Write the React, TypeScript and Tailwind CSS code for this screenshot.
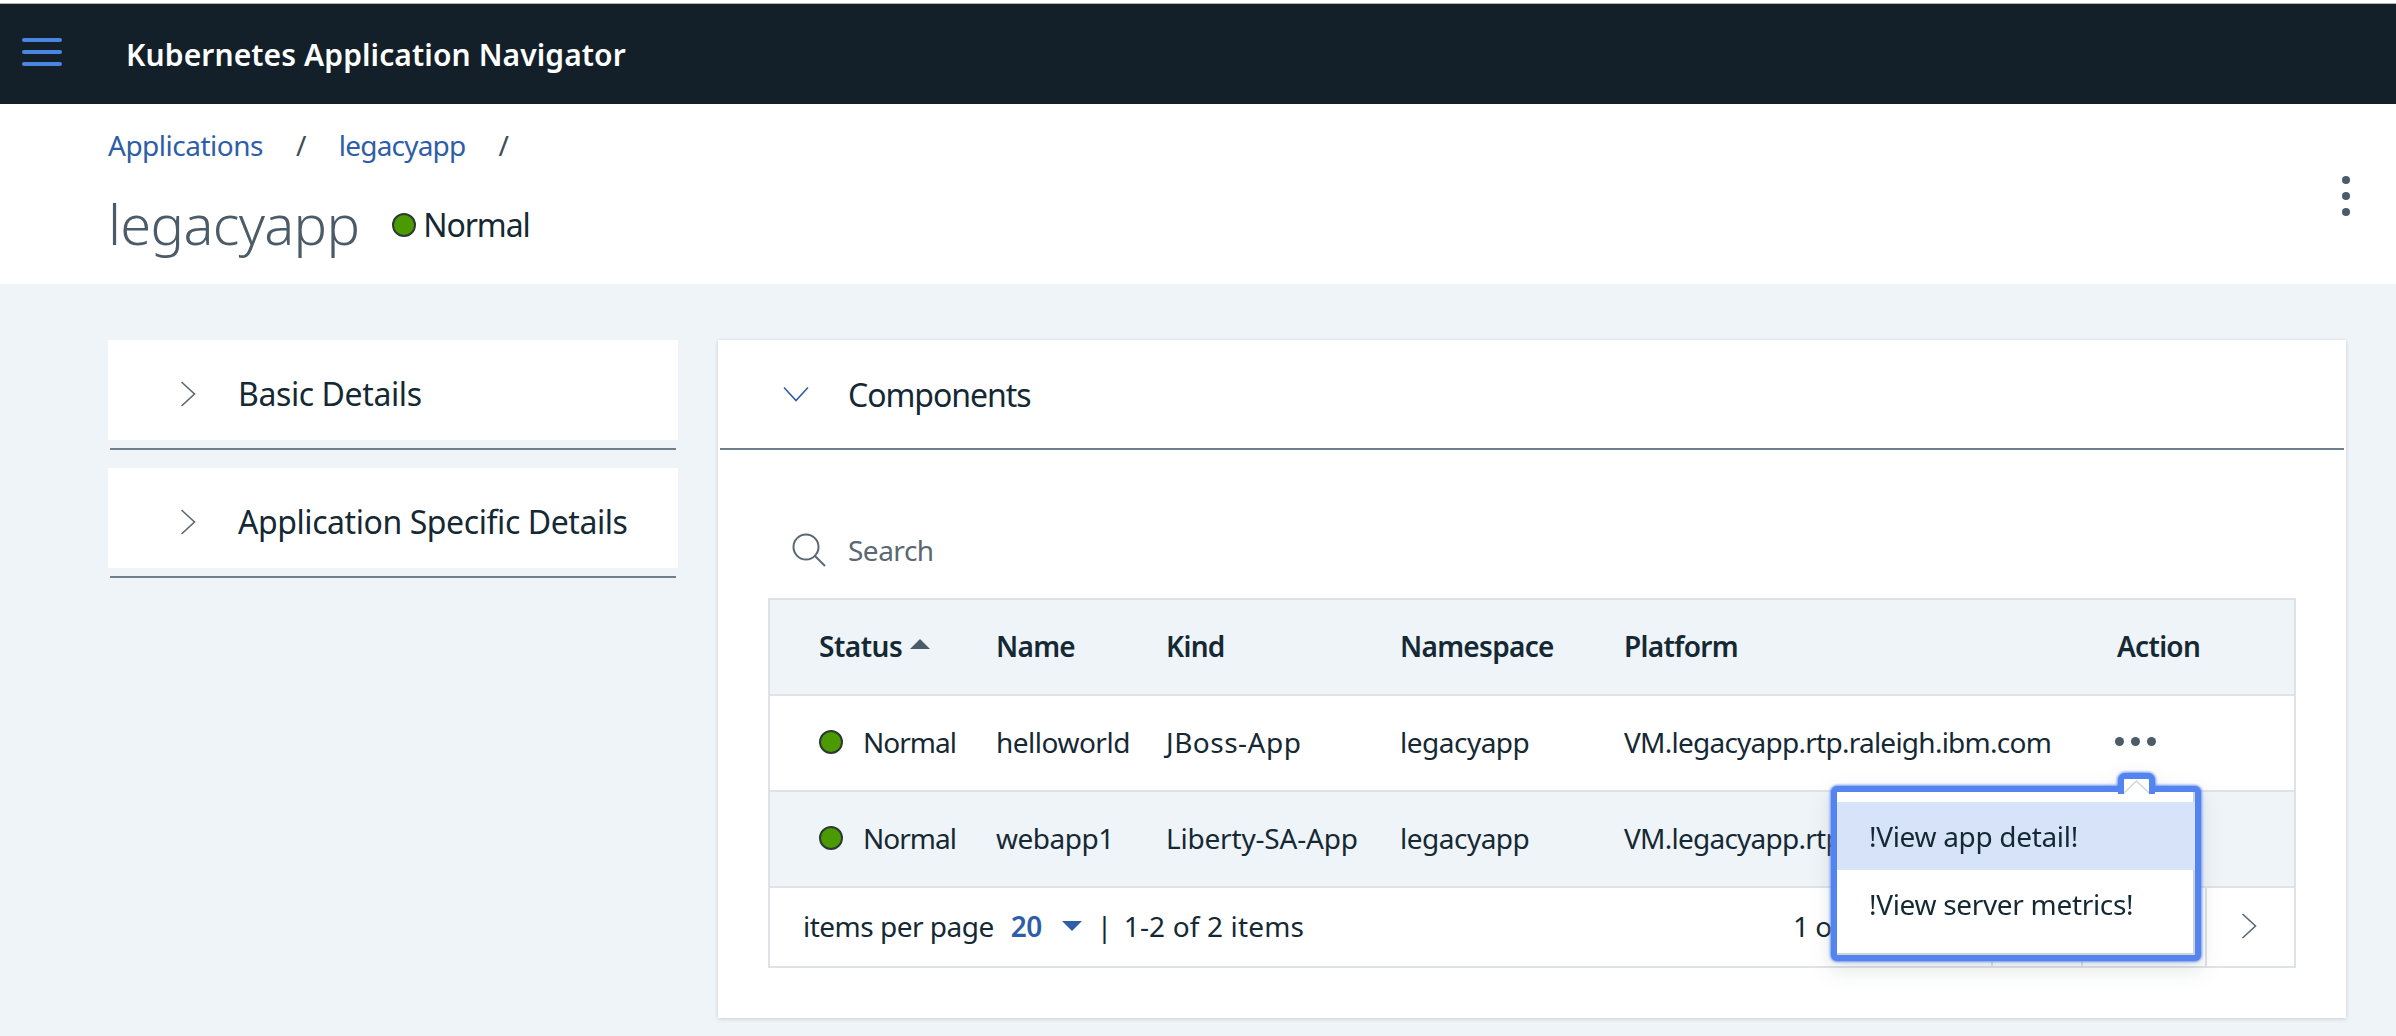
const F = "font-['Noto_Sans','Roboto',sans-serif]";

function Chevron({ className }: { className?: string }) {
  return (
    <svg className={className} width="16" height="26" viewBox="0 0 16 26" fill="none" stroke="currentColor" strokeWidth="1.6">
      <path d="M1.5 1 L14.5 13 L1.5 25" />
    </svg>
  );
}

function Dot({ className }: { className?: string }) {
  return <span className={`block w-6 h-6 rounded-full bg-[#4b9b00] border-2 border-[#2b3a35] shrink-0 ${className ?? ""}`} />;
}

function SideItem({ title, track }: { title: string; track: string }) {
  return (
    <div className="flex flex-col">
      <div className="h-[100px] bg-white flex items-center pl-[72px] pt-2">
        <Chevron className="text-[#5a6872] w-4 mr-[42px]" />
        <span className={`text-[32px] text-[#152934] ${track}`}>{title}</span>
      </div>
      <div className="h-[2px] mt-2 mx-[2px] bg-[#6f7f8c]" />
    </div>
  );
}

const COLS = "grid grid-cols-[177px_170px_234px_224px_493px_1fr] items-center";

function Row({ name, kind, kindTrack, alt }: { name: string; kind: string; kindTrack: string; alt?: boolean }) {
  return (
    <div className={`h-[94px] border-b-2 border-[#dfe3e6] box-content ${alt ? "bg-[#eff4f8]" : "bg-white"} ${COLS} pl-[49px] text-[28px] text-[#152934] tracking-[-0.5px]`}>
      <div className="flex items-center gap-[20px] -mt-[3px]">
        <Dot />
        <span className="tracking-[-1px]">Normal</span>
      </div>
      <span className="-mt-[3px]">{name}</span>
      <span className={`-mt-[3px] ${kindTrack}`}>{kind}</span>
      <span className="-mt-[3px]">legacyapp</span>
      <span className="-mt-[3px] whitespace-nowrap tracking-[-0.75px]">VM.legacyapp.rtp.raleigh.ibm.com</span>
      {!alt && (
        <span className="flex gap-[7px] -mt-[3px] ml-[-2px]">
          <i className="block w-[9px] h-[9px] rounded-full bg-[#4b5b68]" />
          <i className="block w-[9px] h-[9px] rounded-full bg-[#4b5b68]" />
          <i className="block w-[9px] h-[9px] rounded-full bg-[#4b5b68]" />
        </span>
      )}
    </div>
  );
}

export default function App() {
  return (
    <div className={`w-[2396px] h-[1036px] overflow-hidden bg-[#eff4f8] ${F} flex flex-col`}>
      <div className="h-[3px] bg-white shrink-0" />
      <div className="h-[1px] bg-[#b0b4b6] shrink-0" />
      <header className="h-[100px] bg-[#13202a] flex items-center shrink-0">
        <div className="ml-[22px] w-10 flex flex-col gap-2 -mt-[4px]">
          <i className="block h-1 rounded-sm bg-[#4a86e0]" />
          <i className="block h-1 rounded-sm bg-[#4a86e0]" />
          <i className="block h-1 rounded-sm bg-[#4a86e0]" />
        </div>
        <span className="ml-[64px] text-[30px] font-semibold text-white tracking-[0.1px]">Kubernetes Application Navigator</span>
      </header>

      <section className="h-[180px] bg-white flex justify-between shrink-0">
        <div className="pl-[108px] pt-[23px]">
          <nav className="flex items-center text-[28px] text-[#2f5ea8] h-9 tracking-[-0.5px]">
            <span>Applications</span>
            <span className="ml-[33px] text-[#3f4c55]">/</span>
            <span className="ml-[33px] tracking-[-0.8px]">legacyapp</span>
            <span className="ml-[33px] text-[#3f4c55]">/</span>
          </nav>
          <div className="flex items-center mt-[22px]">
            <h1 className="text-[56px] font-light text-[#4b5b68] leading-[76px] tracking-[-0.7px]">legacyapp</h1>
            <Dot className="ml-[33px] mt-[3px]" />
            <span className="ml-[7px] mt-[3px] text-[32px] text-[#152934] tracking-[-1.1px]">Normal</span>
          </div>
        </div>
        <div className="mr-[46px] mt-[72px] flex flex-col gap-2">
          <i className="block w-2 h-2 rounded-full bg-[#4b5b68]" />
          <i className="block w-2 h-2 rounded-full bg-[#4b5b68]" />
          <i className="block w-2 h-2 rounded-full bg-[#4b5b68]" />
        </div>
      </section>

      <main className="flex items-start gap-10 pl-[108px] pr-[50px] pt-14">
        <aside className="w-[570px] shrink-0 flex flex-col gap-[18px]">
          <SideItem title="Basic Details" track="tracking-[-0.4px]" />
          <SideItem title="Application Specific Details" track="tracking-[-0.43px]" />
        </aside>

        <div className="relative w-[1628px] h-[678px] bg-white shadow-[0_1px_4px_rgba(21,41,52,0.18)]">
          <div className="h-[110px] border-b-2 border-[#6f7f8c] box-border mx-[2px] flex items-center pl-[64px]">
            <Chevron className="text-[#2f5ea8] rotate-90 mr-[44px] ml-1 w-4" />
            <span className="mt-[2px] text-[32px] text-[#152934] tracking-[-1.05px]">Components</span>
          </div>
          <div className="h-[148px] flex items-center pl-[74px] pt-[52px] text-[28px] text-[#5a6872] tracking-[-0.5px]">
            <svg width="34" height="34" viewBox="0 0 34 34" fill="none" stroke="#5a6872" strokeWidth="2" className="mr-[22px]">
              <circle cx="14" cy="14" r="12.5" />
              <path d="M23 23 L33 33" />
            </svg>
            <span>Search</span>
          </div>

          <div className="mx-[50px] w-[1528px] border-2 border-[#dfe3e6] relative">
            <div className={`h-[96px] border-b-2 border-[#dfe3e6] bg-[#eff4f8] ${COLS} pl-[49px] pb-[3px] text-[28px] font-semibold text-[#152934] tracking-[-0.7px]`}>
              <span className="flex items-center gap-2 tracking-[-0.5px]">
                Status
                <svg width="20" height="10" viewBox="0 0 20 10" className="-mt-1"><path d="M10 0 L20 10 L0 10 Z" fill="#4b5b68" /></svg>
              </span>
              <span>Name</span>
              <span>Kind</span>
              <span>Namespace</span>
              <span>Platform</span>
              <span>Action</span>
            </div>
            <Row name="helloworld" kind="JBoss-App" kindTrack="tracking-[0.5px]" />
            <Row name="webapp1" kind="Liberty-SA-App" kindTrack="tracking-[-0.2px]" alt />
            <div className="h-[78px] flex items-center pl-[33px] pb-[3px] text-[28px] text-[#152934] tracking-[-0.5px]">
              <span>items per page</span>
              <span className="ml-[17px] font-semibold text-[#2f5ea8]">20</span>
              <svg width="20" height="10" viewBox="0 0 20 10" className="ml-5"><path d="M0 0 L20 0 L10 10 Z" fill="#2f5ea8" /></svg>
              <span className="ml-[15px]">|</span>
              <span className="ml-[12px] tracking-[0.15px]">1-2 of 2 items</span>
              <span className="ml-[489px]">1 of 1 pages</span>
              <span className="absolute right-[301px] bottom-0 h-[78px] w-[2px] bg-[#dfe3e6]" />
              <span className="absolute right-[211px] bottom-0 h-[78px] w-[2px] bg-[#dfe3e6]" />
              <span className="absolute right-[87px] bottom-0 h-[78px] w-[2px] bg-[#dfe3e6]" />
              <Chevron className="absolute right-[37px] bottom-[27px] text-[#5a6872] w-4" />
            </div>
          </div>

          <div className="absolute left-[1113px] top-[446px] w-[370px] h-[175px] [filter:drop-shadow(0_0_1.5px_rgba(90,139,240,1))_drop-shadow(0_0_1px_rgba(90,139,240,0.8))_drop-shadow(0_8px_10px_rgba(21,41,52,0.12))]">
            <div className="w-full h-full rounded-[6px] border-[6px] border-[#5484f0]/95 bg-white bg-clip-padding relative">
              <div className="w-full h-full border-b-2 border-r-2 border-[#cfd3d6] pt-[10px] text-[28px] text-[#152934] tracking-[-0.32px]">
                <div className="h-[68px] -mr-[2px] bg-[#d6e3f9] flex items-center pl-[32px]">!View app detail!</div>
                <div className="h-[68px] flex items-center pl-[32px]">!View server metrics!</div>
              </div>
              <div className="absolute left-[281px] -top-[19px] w-[37px] h-[21px] rounded-t-[7px] border-[6px] border-b-0 border-[#5484f0] bg-white">
                <svg width="25" height="15" viewBox="0 0 25 15" className="block" fill="none" stroke="#d4d7da" strokeWidth="1.5">
                  <path d="M0 14 L12.5 2 L25 14" />
                </svg>
              </div>
            </div>
          </div>
        </div>
      </main>
    </div>
  );
}
